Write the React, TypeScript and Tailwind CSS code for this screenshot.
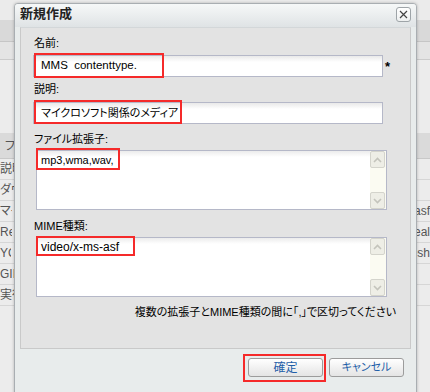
import React from "react";

const font = "font-['Liberation_Sans','Noto_Sans_CJK_JP',sans-serif] [font-feature-settings:'palt']";

const rows = [
  { left: "説明", right: "" },
  { left: "ダウ", right: "" },
  { left: "マイ", right: "asf" },
  { left: "Re", right: "eal" },
  { left: "YO", right: "-sh" },
  { left: "GIF", right: "" },
  { left: "実行", right: "" },
];

function Field({ children, size }: { children?: React.ReactNode; size: string }) {
  return (
    <div className={`ml-[12px] flex h-[22px] w-[350px] items-center border border-[#b5b8c8] bg-[linear-gradient(to_bottom,#e9e9e9,#ffffff_6px)] pl-[7px] text-black ${size}`}>
      {children}
    </div>
  );
}

function Chevron({ up }: { up?: boolean }) {
  return (
    <div className="flex h-[17px] w-[15px] items-center justify-center rounded-[2px] border border-[#d4d4cc] bg-[#eeeee6]">
      <svg width="9" height="6" viewBox="0 0 9 6">
        <path
          d={up ? "M1 5 L4.5 1.5 L8 5" : "M1 1 L4.5 4.5 L8 1"}
          fill="none"
          stroke="#c4c4bc"
          strokeWidth="1.6"
        />
      </svg>
    </div>
  );
}

function Area({ children, size }: { children?: React.ReactNode; size: string }) {
  return (
    <div className="ml-[15px] flex h-[60px] w-[351px] border border-[#b5b8c8] bg-[linear-gradient(to_bottom,#ececec,#ffffff_6px)]">
      <div className={`flex-1 pl-[4px] pt-[2px] leading-[14px] text-black ${size}`}>{children}</div>
      <div className="flex w-[16px] flex-col justify-between bg-[#fbfbf2]">
        <Chevron up />
        <Chevron />
      </div>
    </div>
  );
}

function Label({ children, className }: { children: React.ReactNode; className?: string }) {
  return <div className={`pl-[13px] text-[11px] leading-[14px] text-black ${className ?? ""}`}>{children}</div>;
}

function RedBox({ className }: { className: string }) {
  return <div className={`absolute border-2 border-[#f52a2a] ${className}`} />;
}

export default function App() {
  return (
    <div className={`relative h-[392px] w-[430px] overflow-hidden bg-[#ececec] ${font}`}>
      {/* list behind the dialog */}
      <div className="flex flex-col text-[12px] text-[#555]">
        <div className="h-[20px] bg-[#ebebeb]" />
        <div className="h-[22px] border-b border-[#c6c6c6] bg-[#d9d9d9]" />
        <div className="h-[18px] border-b border-[#cbcbcb] bg-[#e4e4e4]" />
        <div className="h-[73px] bg-[#ececec]" />
        <div className="flex h-[26px] items-center border-b border-[#c8c8c8] bg-[#dadada] pl-[5px]">
          <span className="w-[9px] overflow-hidden whitespace-nowrap">フ</span>
        </div>
        {rows.map((r, i) => (
          <div key={i} className="flex h-[21px] items-center border-b border-[#d6d6d6] bg-[#ececec]">
            <span className="w-[14px] overflow-hidden whitespace-nowrap">{r.left}</span>
            <span className="ml-[402px] whitespace-nowrap">{r.right}</span>
          </div>
        ))}
      </div>

      {/* dialog */}
      <div className="absolute left-[14px] top-[3px] flex h-[400px] w-[403px] flex-col rounded-t-[4px] border border-[#a9aeb2] bg-[#e8ecec] shadow-[0_0_3px_rgba(0,0,0,0.25)]">
        <div className="flex h-[23px] items-start justify-between rounded-t-[3px] bg-[linear-gradient(to_bottom,#f6f8f8,#dfe3e5)] pl-[5px] pr-[5px]">
          <span className="mt-[2px] text-[13px] font-bold leading-[16px] text-[#222]">新規作成</span>
          <div className="mt-[3px] flex h-[15px] w-[15px] items-center justify-center rounded-[3px] border border-[#9ea4a8] bg-[linear-gradient(to_bottom,#ffffff,#eef0f0)]">
            <svg width="9" height="9" viewBox="0 0 9 9">
              <path d="M1 1 L8 8 M8 1 L1 8" stroke="#444" strokeWidth="1.2" />
            </svg>
          </div>
        </div>

        <div className="px-[5px]">
          <div className="flex h-[322px] w-[391px] flex-col border border-[#c9c9c9] border-t-[#d3d7d9] bg-[#e3e3e3] pt-[8px]">
            <Label>名前:</Label>
            <div className="mt-[5px] flex items-center">
              <Field size="text-[11.5px]">MMS&nbsp;&nbsp;contenttype.</Field>
              <span className="ml-[2px] text-[13px] font-bold leading-none text-black">*</span>
            </div>
            <Label className="mt-[5px]">説明:</Label>
            <div className="mt-[6px]">
              <Field size="text-[11px]">マイクロソフト関係のメディア</Field>
            </div>
            <Label className="mt-[8px]">ファイル拡張子:</Label>
            <div className="mt-[4px]">
              <Area size="text-[11px]">mp3,wma,wav,</Area>
            </div>
            <Label className="mt-[9px]">MIME種類:</Label>
            <div className="mt-[4px]">
              <Area size="text-[12px]">video/x-ms-asf</Area>
            </div>
            <div className="mt-[8px] pr-[14px] text-right text-[11px] leading-[14px] text-black">
              複数の拡張子とMIME種類の間に「,」で区切ってください
            </div>
          </div>
        </div>

        <div className="mt-[9px] flex justify-end gap-[6px] pr-[12px]">
          <button className="flex h-[19px] w-[75px] items-center justify-center rounded-[3px] border border-[#9c9c9c] bg-[linear-gradient(to_bottom,#ffffff,#e4e4e4)] text-[12px] text-[#1f5fa8]">
            確定
          </button>
          <button className="flex h-[19px] w-[75px] items-center justify-center rounded-[3px] border border-[#9c9c9c] bg-[linear-gradient(to_bottom,#ffffff,#e4e4e4)] text-[11px] text-[#1f5fa8]">
            キャンセル
          </button>
        </div>
      </div>

      {/* highlight annotations */}
      <RedBox className="left-[34px] top-[53px] h-[25px] w-[130px]" />
      <RedBox className="left-[34px] top-[100px] h-[24px] w-[148px]" />
      <RedBox className="left-[36px] top-[148px] h-[22px] w-[84px]" />
      <RedBox className="left-[36px] top-[236px] h-[20px] w-[99px]" />
      <RedBox className="left-[243px] top-[354px] h-[28px] w-[83px]" />
    </div>
  );
}
